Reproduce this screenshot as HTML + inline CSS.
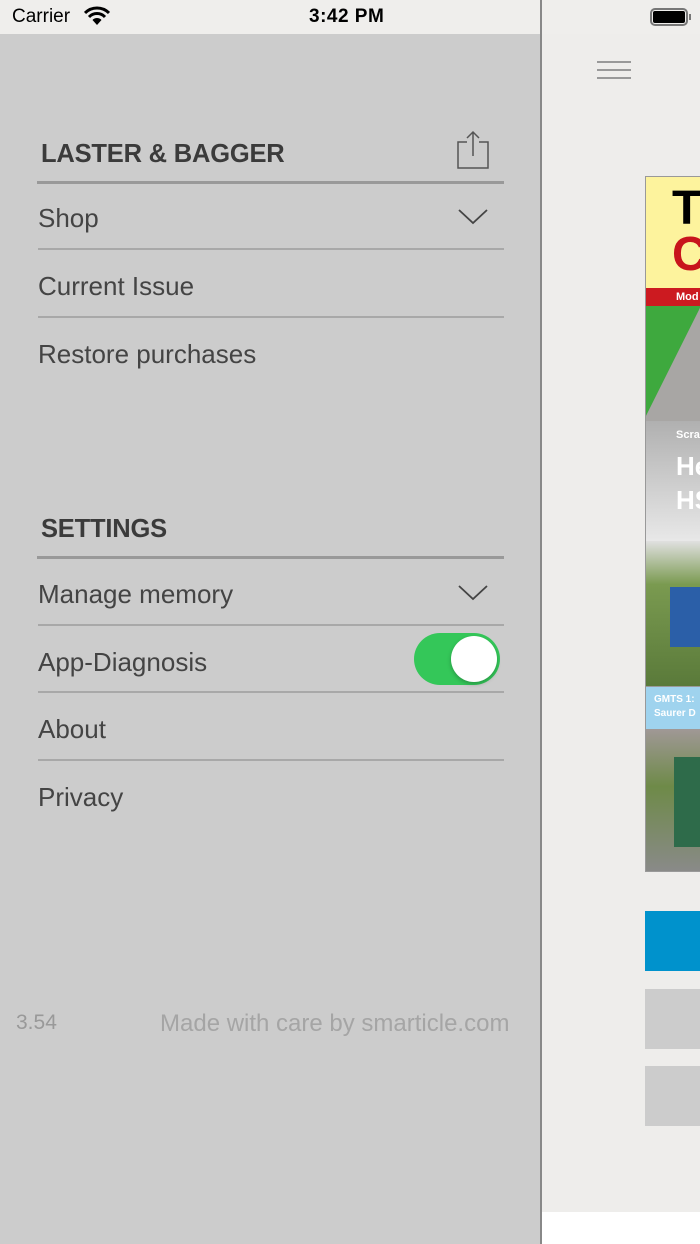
<!DOCTYPE html>
<html><head><style>
*{margin:0;padding:0;box-sizing:border-box}
body{width:700px;height:1244px;position:relative;overflow:hidden;background:#eeedeb;font-family:"Liberation Sans",sans-serif}
.abs{position:absolute}
.side{left:0;top:34px;width:540px;height:1210px;background:#cccccc}
.t{position:absolute;left:38px;font-size:26px;color:#444;line-height:30px}
.h{position:absolute;left:41px;font-size:25.5px;font-weight:bold;color:#3b3b3b;line-height:30px;letter-spacing:-0.2px}
.ln{position:absolute;left:38px;width:466px;height:2px;background:#a8a8a8}
.lh{position:absolute;left:37px;width:467px;height:3px;background:#999}
</style></head><body>
<div class="abs" style="left:0;top:0;width:700px;height:34px;background:#efeeec"></div>
<div class="abs" style="left:12px;top:6px;font-size:19px;color:#000">Carrier</div>
<svg class="abs" style="left:84px;top:6px" width="26" height="20" viewBox="0 0 26 20"><path d="M1 7 A17 17 0 0 1 25 7" stroke="#000" stroke-width="3" fill="none"/><path d="M5 11 A11 11 0 0 1 21 11" stroke="#000" stroke-width="3" fill="none"/><path d="M13 19 L8.5 14 A6 6 0 0 1 17.5 14 Z" fill="#000"/></svg>
<div class="abs" style="left:309px;top:6px;font-size:19px;font-weight:bold;color:#000;letter-spacing:0.5px">3:42 PM</div>
<div class="abs" style="left:650px;top:8px;width:38px;height:18px;border:2px solid #777;border-radius:5px"><div style="margin:1px;height:12px;background:#000;border-radius:2px"></div></div>
<div class="abs" style="left:689px;top:14px;width:2px;height:6px;background:#777"></div>

<div class="abs side"></div>
<div class="abs" style="left:540px;top:0;width:2px;height:1244px;background:#888"></div>
<div class="abs" style="left:542px;top:1212px;width:158px;height:32px;background:#fff"></div>
<div class="abs" style="left:597px;top:61px;width:34px;height:2px;background:#999"></div>
<div class="abs" style="left:597px;top:69px;width:34px;height:2px;background:#999"></div>
<div class="abs" style="left:597px;top:77px;width:34px;height:2px;background:#999"></div>

<!-- cover -->
<div class="abs" style="left:645px;top:176px;width:55px;height:696px;border:1px solid #999;border-right:none;background:#9a9a9a;overflow:hidden">
 <div class="abs" style="left:0;top:0;width:55px;height:111px;background:#fdf39d"></div>
 <div class="abs" style="left:26px;top:4px;font-size:48px;font-weight:bold;color:#000">T</div>
 <div class="abs" style="left:26px;top:50px;font-size:48px;font-weight:bold;color:#c8141c">C</div>
 <div class="abs" style="left:0;top:111px;width:55px;height:18px;background:#cc1a20;color:#fff;font-size:11px;font-weight:bold;padding:3px 0 0 30px">Mod</div>
 <svg class="abs" style="left:0;top:129px" width="55" height="115"><polygon points="0,0 55,0 0,110" fill="#3ea93e"/><polygon points="0,110 55,0 55,115 0,115" fill="#a8a6a4"/></svg>
 <div class="abs" style="left:0;top:244px;width:55px;height:120px;background:linear-gradient(#b0b0b0,#e8e8e8)"></div>
 <div class="abs" style="left:30px;top:252px;font-size:11px;color:#fff;font-weight:bold">Scra</div>
 <div class="abs" style="left:30px;top:272px;font-size:26px;color:#fff;font-weight:bold;line-height:34px">He<br>HS</div>
 <div class="abs" style="left:0;top:364px;width:55px;height:145px;background:linear-gradient(#e0e0e0,#7a9a50 30%,#5a7a3a)"></div>
 <div class="abs" style="left:24px;top:410px;width:31px;height:60px;background:#2b5fa8"></div>
 <div class="abs" style="left:0;top:510px;width:55px;height:42px;background:#9fd3ee;color:#fff;font-size:10px;font-weight:bold;padding:6px 0 0 8px;line-height:14px">GMTS 1:<br>Saurer D</div>
 <div class="abs" style="left:0;top:552px;width:55px;height:144px;background:linear-gradient(#a09896,#6e8a48 40%,#8a8a8a)"></div>
 <div class="abs" style="left:28px;top:580px;width:27px;height:90px;background:#2e6b4a"></div>
</div>
<div class="abs" style="left:645px;top:911px;width:55px;height:60px;background:#0092cc"></div>
<div class="abs" style="left:645px;top:989px;width:55px;height:60px;background:#cccccc"></div>
<div class="abs" style="left:645px;top:1066px;width:55px;height:60px;background:#cccccc"></div>

<!-- menu -->
<div class="h" style="top:139px">LASTER &amp; BAGGER</div>
<svg class="abs" style="left:455px;top:130px" width="36" height="40" viewBox="0 0 36 40"><path d="M12 12 H3 V38 H33 V12 H24" stroke="#555" stroke-width="1.5" fill="none"/><path d="M18 2 V26 M12 8 L18 2 L24 8" stroke="#555" stroke-width="1.5" fill="none"/></svg>
<div class="lh" style="top:181px"></div>
<div class="t" style="top:203px">Shop</div>
<svg class="abs" style="left:458px;top:208px" width="30" height="18"><path d="M1 2 L15 15 L29 2" stroke="#444" stroke-width="1.8" fill="none"/></svg>
<div class="ln" style="top:248px"></div>
<div class="t" style="top:271px">Current Issue</div>
<div class="ln" style="top:316px"></div>
<div class="t" style="top:339px">Restore purchases</div>

<div class="h" style="top:514px">SETTINGS</div>
<div class="lh" style="top:556px"></div>
<div class="t" style="top:579px">Manage memory</div>
<svg class="abs" style="left:458px;top:584px" width="30" height="18"><path d="M1 2 L15 15 L29 2" stroke="#444" stroke-width="1.8" fill="none"/></svg>
<div class="ln" style="top:624px"></div>
<div class="t" style="top:647px">App-Diagnosis</div>
<div class="abs" style="left:414px;top:633px;width:86px;height:52px;border-radius:26px;background:#34c759"></div>
<div class="abs" style="left:451px;top:636px;width:46px;height:46px;border-radius:50%;background:#fff;box-shadow:0 2px 4px rgba(0,0,0,.25)"></div>
<div class="ln" style="top:691px"></div>
<div class="t" style="top:714px">About</div>
<div class="ln" style="top:759px"></div>
<div class="t" style="top:782px">Privacy</div>

<div class="abs" style="left:16px;top:1011px;font-size:21px;color:#999">3.54</div>
<div class="abs" style="left:160px;top:1010px;font-size:24px;color:#a5a5a5">Made with care by smarticle.com</div>
</body></html>
